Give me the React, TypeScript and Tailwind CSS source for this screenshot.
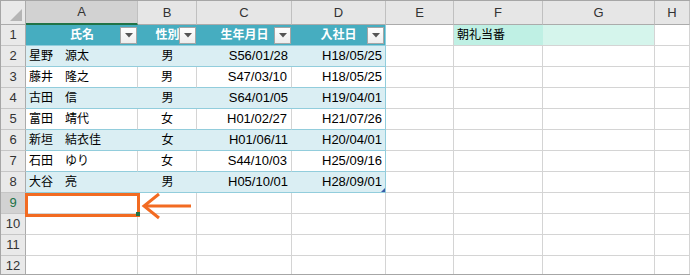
import React from "react";

const people = [
  ["星野　源太", "男", "S56/01/28", "H18/05/25"],
  ["藤井　隆之", "男", "S47/03/10", "H18/05/25"],
  ["古田　信", "男", "S64/01/05", "H19/04/01"],
  ["富田　靖代", "女", "H01/02/27", "H21/07/26"],
  ["新垣　結衣佳", "女", "H01/06/11", "H20/04/01"],
  ["石田　ゆり", "女", "S44/10/03", "H25/09/16"],
  ["大谷　亮", "男", "H05/10/01", "H28/09/01"],
];

const letters = ["A", "B", "C", "D", "E", "F", "G", "H"];

function FilterButton() {
  return (
    <div className="absolute right-[1px] top-[2px] w-[17px] h-[17px] border border-[#A6A6A6] bg-gradient-to-b from-white to-[#EDEDED] flex items-center justify-center">
      <svg width="8" height="5" viewBox="0 0 8 5">
        <path d="M0 0 H8 L4 4.5 Z" fill="#555" />
      </svg>
    </div>
  );
}

function RowHeader({ n, active }: { n: number; active?: boolean }) {
  return (
    <div
      className={
        active
          ? "flex items-center justify-center bg-[#D2D2D2] text-[#217346] border-r border-b border-r-[#ABABAB] border-b-[#C6C6C6] text-[13px]"
          : "flex items-center justify-center bg-[#E9E9E9] text-[#333] border-r border-b border-r-[#ABABAB] border-b-[#C6C6C6] text-[13px]"
      }
    >
      {n}
    </div>
  );
}

function Blank() {
  return <div className="border-r border-b border-[#D4D4D4] bg-white" />;
}

export default function App() {
  return (
    <div
      className="relative w-[690px] h-[275px] overflow-hidden bg-white border-t border-l border-b border-[#A6A6A6]"
      style={{ fontFamily: "'Liberation Sans', 'Noto Sans CJK JP', sans-serif" }}
    >
      <div className="grid grid-cols-[25px_112px_59px_95px_94px_68px_89px_112px_35px] grid-rows-[24px_repeat(12,21px)] text-black">
        {/* corner */}
        <div className="relative bg-[#E9E9E9] border-r border-b border-r-[#ABABAB] border-b-[#ABABAB]">
          <svg className="absolute right-[3px] bottom-[3px]" width="12" height="12" viewBox="0 0 12 12">
            <path d="M12 0 V12 H0 Z" fill="#B5B5B5" />
          </svg>
        </div>
        {letters.map((l) =>
          l === "A" ? (
            <div
              key={l}
              className="flex items-center justify-center bg-[#D2D2D2] text-[#333] text-[13px] border-r border-r-[#C0C0C0] border-b-2 border-b-[#217346]"
            >
              {l}
            </div>
          ) : (
            <div
              key={l}
              className="flex items-center justify-center bg-[#E6E6E6] text-[#333] text-[13px] border-r border-r-[#C0C0C0] border-b border-b-[#ABABAB]"
            >
              {l}
            </div>
          )
        )}

        {/* Row 1 header of table */}
        <RowHeader n={1} />
        <div className="relative flex items-center justify-center bg-[#46ADC0] text-white font-bold text-[12px] border-b border-[#92CDDC]">
          氏名
          <FilterButton />
        </div>
        <div className="relative flex items-center justify-center bg-[#46ADC0] text-white font-bold text-[12px] border-b border-[#92CDDC]">
          性別
          <FilterButton />
        </div>
        <div className="relative flex items-center justify-center bg-[#46ADC0] text-white font-bold text-[12px] border-b border-[#92CDDC]">
          生年月日
          <FilterButton />
        </div>
        <div className="relative flex items-center justify-center bg-[#46ADC0] text-white font-bold text-[12px] border-b border-r border-[#92CDDC]">
          入社日
          <FilterButton />
        </div>
        <Blank />
        <div className="flex items-center pl-[3px] bg-[#BFF0E4] text-[12px] border-b border-[#D4D4D4]">朝礼当番</div>
        <div className="bg-[#D5F5EC] border-r border-b border-r-[#D4D4D4] border-b-[#D4D4D4]" />
        <Blank />

        {people.map((p, i) => {
          const band = i % 2 === 0;
          const n = i + 2;
          return (
            <React.Fragment key={n}>
              <RowHeader n={n} />
              {band ? (
                <>
                  <div className="flex items-center pl-[3px] bg-[#DAEEF3] text-[12px] border-b border-[#92CDDC]">{p[0]}</div>
                  <div className="flex items-center justify-center bg-[#DAEEF3] text-[12px] border-b border-[#92CDDC]">{p[1]}</div>
                  <div className="flex items-center justify-end pr-[4px] bg-[#DAEEF3] text-[13px] border-b border-[#92CDDC]">{p[2]}</div>
                  <div className="relative flex items-center justify-end pr-[3px] bg-[#DAEEF3] text-[13px] border-b border-r border-[#92CDDC]">
                    {p[3]}
                    {n === 8 && (
                      <svg className="absolute right-0 bottom-0" width="4" height="4" viewBox="0 0 4 4">
                        <path d="M4 0 V4 H0 Z" fill="#3A5BA8" />
                      </svg>
                    )}
                  </div>
                </>
              ) : (
                <>
                  <div className="flex items-center pl-[3px] bg-white text-[12px] border-r border-r-[#D4D4D4] border-b border-b-[#92CDDC]">{p[0]}</div>
                  <div className="flex items-center justify-center bg-white text-[12px] border-r border-r-[#D4D4D4] border-b border-b-[#92CDDC]">{p[1]}</div>
                  <div className="flex items-center justify-end pr-[4px] bg-white text-[13px] border-r border-r-[#D4D4D4] border-b border-b-[#92CDDC]">{p[2]}</div>
                  <div className="flex items-center justify-end pr-[3px] bg-white text-[13px] border-b border-r border-[#92CDDC]">{p[3]}</div>
                </>
              )}
              <Blank />
              <Blank />
              <Blank />
              <Blank />
            </React.Fragment>
          );
        })}

        {[9, 10, 11, 12].map((n) => (
          <React.Fragment key={n}>
            <RowHeader n={n} active={n === 9} />
            <Blank />
            <Blank />
            <Blank />
            <Blank />
            <Blank />
            <Blank />
            <Blank />
            <Blank />
          </React.Fragment>
        ))}
      </div>

      {/* selection highlight on A9 */}
      <div className="absolute left-[24px] top-[192px] w-[115px] h-[24px] border-[3px] border-[#F26B22]" />
      <div className="absolute left-[135px] top-[211px] w-[4px] h-[4px] bg-[#217346]" />

      {/* arrow */}
      <svg className="absolute left-[139px] top-[191px]" width="54" height="28" viewBox="0 0 54 28">
        <path d="M4 14 H51" stroke="#F26B22" strokeWidth="3" fill="none" />
        <path d="M19 2 L4 14 L19 26" stroke="#F26B22" strokeWidth="3" fill="none" strokeLinejoin="miter" />
      </svg>
    </div>
  );
}
